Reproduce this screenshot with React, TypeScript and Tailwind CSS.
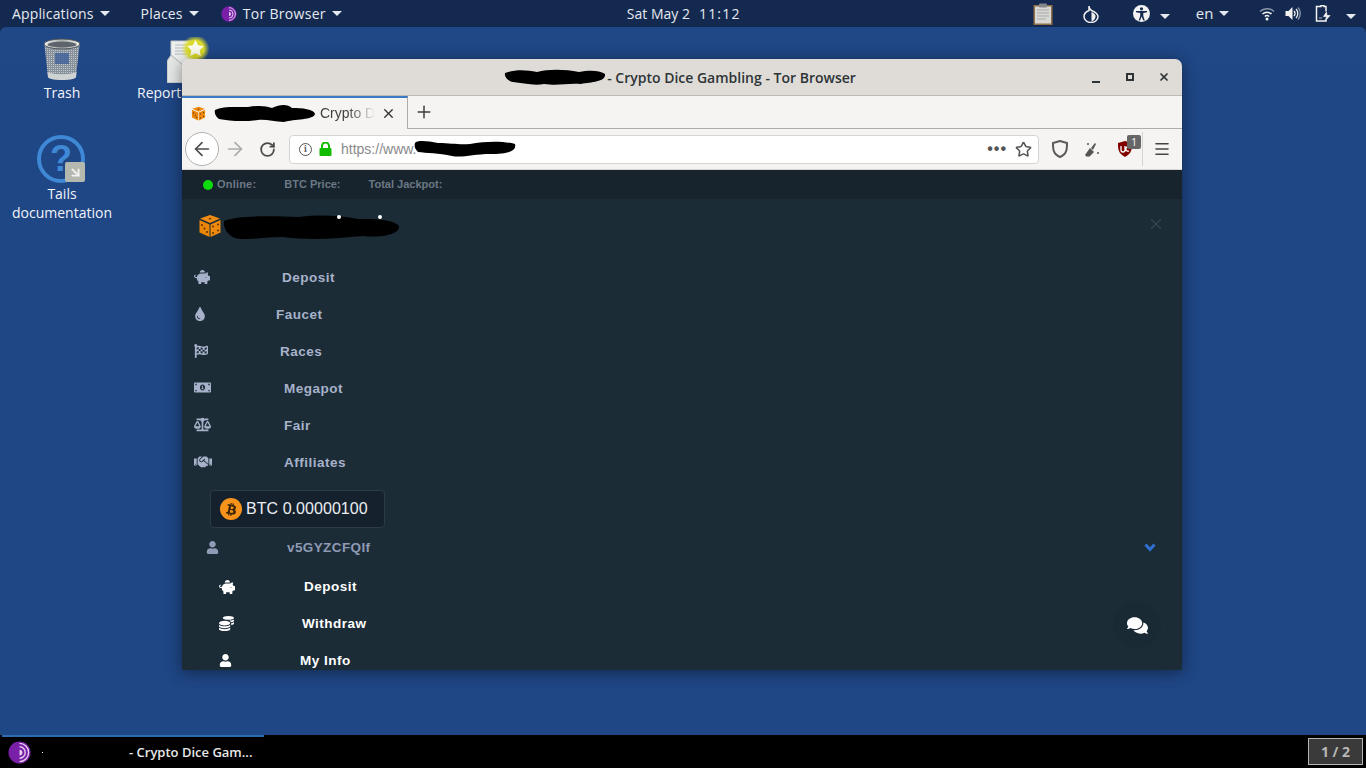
import {
  FaBalanceScale,
  FaBtc,
  FaCoins,
  FaComments,
  FaFlagCheckered,
  FaHandshake,
  FaMoneyBillAlt,
  FaPiggyBank,
  FaTint,
  FaUser,
} from 'react-icons/fa';
import { ArrowLeft, ArrowRight, Menu, Plus, RotateCw, Star, X } from 'lucide-react';

const sans = 'font-["Liberation_Sans",Arial,sans-serif]';
const ui = 'font-["Open_Sans","Noto_Sans",sans-serif]';

function Caret() {
  return <span className="ml-[6px] inline-block h-0 w-0 border-x-[5px] border-t-[5px] border-x-transparent border-t-[#e6e9ef]" />;
}

function Blob({ d, className, w, h, children }: { d: string; className: string; w: number; h: number; children?: React.ReactNode }) {
  return (
    <svg className={className} width={w} height={h} viewBox={`0 0 ${w} ${h}`}>
      <path d={d} fill="#000" />
      {children}
    </svg>
  );
}

function Dice({ size }: { size: number }) {
  return (
    <svg width={size} height={size} viewBox="0 0 24 24">
      <path d="M12 1 22 4.500 12 9 2 4.500Z" fill="#f08c12" />
      <path d="M1.500 6 11.500 10.500V23L1.500 18.500Z" fill="#e98507" />
      <path d="M22.500 6 12.500 10.500V23L22.500 18.500Z" fill="#ef8a0c" />
      <g fill="#5a3300">
        <ellipse cx="12" cy="4.800" rx="1.400" ry="0.800" />
        <circle cx="4" cy="11" r="1" />
        <circle cx="6.500" cy="14.500" r="1" />
        <circle cx="9" cy="18" r="1" />
        <circle cx="15" cy="12.500" r="1" />
        <circle cx="20" cy="10.500" r="1" />
        <circle cx="15" cy="19" r="1" />
        <circle cx="20" cy="16.500" r="1" />
      </g>
    </svg>
  );
}

function TorIcon({ size }: { size: number }) {
  return (
    <svg width={size} height={size} viewBox="0 0 24 24">
      <circle cx="12" cy="12" r="11.500" fill="#7a1fa8" />
      <path d="M12 2.500a9.500 9.500 0 0 1 0 19" fill="none" stroke="#e6d3f0" strokeWidth="1.400" />
      <path d="M12 6a6 6 0 0 1 0 12" fill="none" stroke="#e6d3f0" strokeWidth="1.400" />
      <path d="M12 9a3 3 0 0 1 0 6Z" fill="#e6d3f0" />
    </svg>
  );
}

function TopBar() {
  return (
    <div className={`flex h-[27px] shrink-0 items-center bg-[#14294f] text-[14px] font-medium text-[#e6e9ef] ${ui}`}>
      <div className="flex items-center pl-[12px]">
        <span className="tracking-[0.15px]">Applications</span>
        <Caret />
      </div>
      <div className="ml-[31px] flex items-center">
        <span className="tracking-[0.2px]">Places</span>
        <Caret />
      </div>
      <div className="ml-[22px] flex items-center">
        <TorIcon size={16} />
        <span className="ml-[6px] tracking-[0.3px]">Tor Browser</span>
        <Caret />
      </div>
      <div className="ml-[285px] flex w-[114px] whitespace-pre">
        <span>Sat May 2</span>
        <span className="ml-[9px] tracking-[1.2px]">11:12</span>
      </div>
      <div className="ml-[292px] flex items-center">
        <svg width="20" height="22" viewBox="0 0 20 22">
          <rect x="0.500" y="2" width="19" height="20" fill="#8e6f47" />
          <rect x="2" y="3.500" width="16" height="17" fill="#d8d8d4" />
          <rect x="6" y="0.500" width="8" height="4" rx="1" fill="#85888a" />
          <path d="M4 7h12M4 10h12M4 13h12M4 16h9" stroke="#a9aaa8" strokeWidth="1" />
        </svg>
        <svg className="ml-[30px]" width="16" height="18" viewBox="0 0 16 18">
          <path d="M6 1c0 3 1 3.500 2.500 4.500C12 7 15 8.500 15 11.500a7 6 0 0 1-14 0C1 8.500 3.500 6.500 6 5.500Z" fill="none" stroke="#f2f2f2" strokeWidth="1.500" />
          <path d="M8.500 7c3 1 4.500 3 4 5-.500 2.500-2.500 4-4 4.500Z" fill="#f2f2f2" />
        </svg>
        <svg className="ml-[34px]" width="17" height="17" viewBox="0 0 17 17">
          <circle cx="8.500" cy="8.500" r="8.500" fill="#f2f2f2" />
          <circle cx="8.500" cy="3.800" r="1.600" fill="#14294f" />
          <path d="M3 6h11v1.300l-3.700.8v2.900l1.500 4.500h-1.400L8.500 11.500 7.100 15.500H5.700L7.200 11V8.100L3 7.300Z" fill="#14294f" />
        </svg>
        <span className="ml-[4px]">
          <Caret />
        </span>
        <span className="ml-[26px] text-[15px]">en</span>
        <Caret />
        <svg className="ml-[30px]" width="16" height="14" viewBox="0 0 16 14">
          <path d="M1 4.500a10 10 0 0 1 14 0" fill="none" stroke="#8b96ab" strokeWidth="1.500" />
          <path d="M3.500 7a6.500 6.500 0 0 1 9 0" fill="none" stroke="#f2f2f2" strokeWidth="1.500" />
          <path d="M5.800 9.500a3.200 3.200 0 0 1 4.400 0" fill="none" stroke="#f2f2f2" strokeWidth="1.500" />
          <circle cx="8" cy="12" r="1.500" fill="#f2f2f2" />
        </svg>
        <svg className="ml-[10px]" width="16" height="15" viewBox="0 0 16 15">
          <path d="M0.500 5H3.500L7.500 1V14L3.500 10H0.500Z" fill="#f2f2f2" />
          <path d="M9 5a3.500 3.500 0 0 1 0 5" fill="none" stroke="#f2f2f2" strokeWidth="1.300" />
          <path d="M11 3a6.500 6.500 0 0 1 0 9" fill="none" stroke="#f2f2f2" strokeWidth="1.300" />
          <path d="M13 1.500a9 9 0 0 1 0 12" fill="none" stroke="#8b96ab" strokeWidth="1.300" />
        </svg>
        <svg className="ml-[14px]" width="16" height="17" viewBox="0 0 16 17">
          <path d="M3 1.500h3V0.500h3v1h2v5M11 14.500V16H1.500V1.500H3" fill="none" stroke="#f2f2f2" strokeWidth="1.500" />
          <path d="M4 13h3M11.500 7 8.500 11.500H11.500L10.500 15.500 15 10.500H12Z" fill="#f2f2f2" stroke="#f2f2f2" strokeWidth="0.700" />
        </svg>
        <span className="ml-[9px]">
          <Caret />
        </span>
      </div>
    </div>
  );
}

function TrashIcon() {
  return (
    <svg width="38" height="44" viewBox="0 0 38 44">
      <defs>
        <pattern id="mesh" width="2" height="2" patternUnits="userSpaceOnUse">
          <rect width="2" height="2" fill="#87919c" />
          <rect width="1" height="1" fill="#c1c6cb" />
        </pattern>
        <linearGradient id="rim" x1="0" x2="1">
          <stop offset="0" stopColor="#f0f2f1" />
          <stop offset="0.500" stopColor="#a9adab" />
          <stop offset="1" stopColor="#eef0ef" />
        </linearGradient>
      </defs>
      <path d="M1.500 7 5 39c1 4 27 4 28 0L36.500 7Z" fill="url(#mesh)" />
      <path d="M12 15h14v11H12Z" fill="#3d5f98" opacity="0.800" />
      <path d="M4.500 34c6 3 23 3 29 0l-.5 5c-1 4-27 4-28 0Z" fill="#cfd2d2" />
      <ellipse cx="19" cy="6" rx="18" ry="5" fill="url(#rim)" stroke="#4b5157" />
      <ellipse cx="19" cy="6.500" rx="14.500" ry="3" fill="#5d646b" />
    </svg>
  );
}

function ReportIcon() {
  return (
    <svg className="ml-[30px]" width="42" height="46" viewBox="0 0 42 46">
      <defs>
        <radialGradient id="glow">
          <stop offset="0.600" stopColor="#dcdb2a" />
          <stop offset="1" stopColor="#dcdb2a" stopOpacity="0" />
        </radialGradient>
      </defs>
      <path d="M4 4h24v28H4Z" fill="#eef0f0" stroke="#c0c4c4" />
      <path d="M8 8h16M8 11h16M8 14h16M8 17h12" stroke="#b4b9bb" />
      <path d="M0 24 4 18 16 28 30 20V46H0Z" fill="#e6e8e7" stroke="#b0b5b3" />
      <circle cx="28.500" cy="12" r="14" fill="url(#glow)" />
      <path d="m28.500 3 2.600 5.300 5.800.8-4.200 4.100 1 5.800-5.200-2.700-5.200 2.700 1-5.800-4.200-4.100 5.800-.8Z" fill="#fbfbef" />
    </svg>
  );
}

function DesktopIcons() {
  return (
    <div className={`text-[14px] text-[#f2f4f8] ${ui}`}>
      <div className="absolute left-[22px] top-[11px] flex w-[80px] flex-col items-center">
        <TrashIcon />
        <span className="mt-[1px] leading-[19px]">Trash</span>
      </div>
      <div className="absolute left-[137px] top-[10px]">
        <ReportIcon />
        <span className="block leading-[19px]">Report an error</span>
      </div>
      <div className="absolute left-[2px] top-[108px] flex w-[120px] flex-col items-center">
        <div className="relative h-[50px] w-[50px]">
          <div className={`flex h-[48px] w-[48px] items-center justify-center rounded-full border-[4px] border-[#3f88d6] text-[36px] font-bold text-[#3f88d6] ${sans}`}>
            ?
          </div>
          <div className="absolute bottom-[3px] right-[2px] flex h-[20px] w-[20px] items-center justify-center rounded-[2px] bg-[#b5b8ae]">
            <ArrowRight size={15} className="rotate-45 text-[#f2f2f2]" strokeWidth={3} />
          </div>
        </div>
        <span className="mt-[-1px] leading-[19px]">Tails</span>
        <span className="leading-[19px]">documentation</span>
      </div>
    </div>
  );
}

function TitleBar() {
  return (
    <div className={`relative flex h-[37px] shrink-0 items-center justify-center rounded-t-[7px] border-b border-[#bdb9b3] bg-[#dfdcd8] text-[14px] font-semibold text-[#2e3436] ${ui}`}>
      <div className="mr-[4px] flex items-center">
        <Blob
          className="mr-[1px]"
          w={102}
          h={17}
          d="M1 4C12 0 22 1 33 3 44 0 60 0 75 3 85 1 95 1 101 5 102 13 88 13 77 15 62 14 55 17 40 15 30 17 18 14 9 13 4 12 0 8 1 4Z"
        />
        <span>- Crypto Dice Gambling - Tor Browser</span>
      </div>
      <div className="absolute right-[12px] top-0 flex h-[36px] items-center gap-[24px] text-[#2e3436]">
        <span className="mr-[2px] mt-[9px] block h-[2px] w-[8px] bg-[#2e3436]" />
        <span className="block h-[8px] w-[8px] border-[2px] border-[#2e3436]" />
        <X size={12} strokeWidth={3.500} />
      </div>
    </div>
  );
}

function TabBar() {
  return (
    <div className="flex h-[33px] shrink-0 border-b border-[#aeaca8] bg-[#f5f4f2]">
      <div className={`flex h-[33px] w-[226px] items-center border-r border-[#aeaca8] border-t-[2px] border-t-[#3b7ac4] bg-[#f5f4f2] pl-[9px] text-[14px] ${sans}`}>
        <Dice size={15} />
        <Blob
          className="ml-[8px]"
          w={102}
          h={19}
          d="M1 6C8 2 22 3 34 3 45 1 52 2 58 4 66 0 74 0 78 4 88 4 100 5 101 10 100 16 80 15 70 18 60 18 52 15 44 16 30 18 15 17 5 15 2 13 0 9 1 6Z"
        />
        <span className="ml-[4px] bg-gradient-to-r from-[#3c3c3c] from-[50%] to-[#f5f4f2] bg-clip-text text-transparent">Crypto D</span>
        <X size={15} className="ml-[6px] text-[#333]" strokeWidth={2.200} />
      </div>
      <div className="flex w-[31px] items-center justify-center">
        <Plus size={20} className="text-[#3f3f3f]" strokeWidth={1.800} />
      </div>
    </div>
  );
}

function NavBar() {
  return (
    <div className={`flex h-[41px] shrink-0 items-center border-b border-[#d8d6d3] bg-[#f5f4f2] text-[#555] ${sans}`}>
      <div className="ml-[3px] flex h-[34px] w-[34px] items-center justify-center rounded-full border border-[#b1b1b1] bg-white">
        <ArrowLeft size={22} className="text-[#4a4a4a]" strokeWidth={1.800} />
      </div>
      <ArrowRight size={22} className="ml-[5px] text-[#aaa]" strokeWidth={1.800} />
      <RotateCw size={17} className="ml-[13px] text-[#4a4a4a]" strokeWidth={2.500} />
      <div className="ml-[13px] flex h-[29px] w-[750px] items-center rounded-[4px] border border-[#d6d4d0] bg-white">
        <span className="ml-[9px] flex h-[13px] w-[13px] items-center justify-center rounded-full border-[1.500px] border-[#555] font-serif text-[9px] font-bold leading-none">i</span>
        <svg className="ml-[7px]" width="13" height="14" viewBox="0 0 13 14">
          <path d="M3 6V4a3.500 3.500 0 0 1 7 0v2" fill="none" stroke="#12bc00" strokeWidth="2" />
          <rect x="0.500" y="6" width="12" height="8" rx="1" fill="#12bc00" />
        </svg>
        <span className="ml-[9px] text-[14px] text-[#8a8a8a]">https://www.</span>
        <Blob
          className="ml-[-2px]"
          w={102}
          h={18}
          d="M1 3C3 0 14 1 24 3 38 3 44 5 56 4 72 1 90 1 101 4 103 12 92 14 76 14 60 14 48 18 38 16 25 13 12 13 4 12 1 9 0 6 1 3Z"
        />
        <span className="ml-auto text-[16px] font-bold leading-none tracking-[1px] text-[#555]">•••</span>
        <Star size={17} className="ml-[8px] mr-[6px] text-[#555]" strokeWidth={2.200} />
      </div>
      <svg className="ml-[13px]" width="16" height="18" viewBox="0 0 16 18">
        <path d="M8 1 15 3c0 6 0 11-7 14C1 14 1 9 1 3Z" fill="none" stroke="#5a5a5a" strokeWidth="2" />
      </svg>
      <svg className="ml-[15px]" width="17" height="17" viewBox="0 0 17 17">
        <path d="M7 7 2 14l2 2 1-1 1 1 5-5Z" fill="#555" />
        <path d="m8 7 4-5 1 1-3 6Z" fill="#555" />
        <path d="M4 3h2M5 2v2M14 12h2M15 11v2" stroke="#555" />
      </svg>
      <div className="relative ml-[18px] h-[16px] w-[14px]">
        <svg width="14" height="16" viewBox="0 0 14 16">
          <path d="M7 0 14 2c0 6 0 10-7 14C0 12 0 8 0 2Z" fill="#800000" />
          <path d="M3 5v4a2 2 0 0 0 4 0V5M11 6a2.200 2.200 0 1 0 0 4" fill="none" stroke="#fff" strokeWidth="1.300" />
        </svg>
        <span className={`absolute left-[9px] top-[-6px] flex h-[14px] w-[14px] items-center justify-center rounded-[2px] bg-[#666] text-[10px] text-white ${ui}`}>1</span>
      </div>
      <span className="ml-[10px] h-[34px] w-px bg-[#d6d4d0]" />
      <Menu size={18} className="ml-[10px] text-[#444]" strokeWidth={2.200} />
    </div>
  );
}

const mainLinks = [
  { label: 'Deposit', icon: FaPiggyBank, textClass: 'left-[100px]', iconClass: 'text-[16px]' },
  { label: 'Faucet', icon: FaTint, textClass: 'left-[94px]', iconClass: 'text-[14px] -ml-[1px]' },
  { label: 'Races', icon: FaFlagCheckered, textClass: 'left-[98px]', iconClass: 'text-[14px]' },
  { label: 'Megapot', icon: FaMoneyBillAlt, textClass: 'left-[102px]', iconClass: 'text-[17px]' },
  { label: 'Fair', icon: FaBalanceScale, textClass: 'left-[102px]', iconClass: 'text-[17px]' },
  { label: 'Affiliates', icon: FaHandshake, textClass: 'left-[102px]', iconClass: 'text-[18px]' },
];

const accountLinks = [
  { label: 'Deposit', icon: FaPiggyBank, textClass: 'left-[122px]', iconClass: 'text-[16px]' },
  { label: 'Withdraw', icon: FaCoins, textClass: 'left-[120px]', iconClass: 'text-[15px]' },
  { label: 'My Info', icon: FaUser, textClass: 'left-[118px]', iconClass: 'text-[13px]' },
];

function SiteContent() {
  return (
    <div className={`relative min-h-0 flex-1 overflow-hidden bg-[#1b2c37] ${sans}`}>
      <div className="flex h-[29px] items-center bg-[#17242d] text-[11px] font-bold text-[#6c7885]">
        <span className="ml-[21px] h-[10px] w-[10px] rounded-full bg-[#0fdc0f]" />
        <span className="ml-[4px] tracking-[0.2px]">Online:</span>
        <span className="ml-[28px]">BTC Price:</span>
        <span className="ml-[28px]">Total Jackpot:</span>
      </div>
      <div className="flex h-[59px] items-center pb-[6px] pl-[16px]">
        <Dice size={24} />
        <Blob
          className="ml-[1px] mt-[2px]"
          w={177}
          h={28}
          d="M1 8C14 2 50 3 76 4 100 1 118 3 135 6 150 6 170 6 176 13 177 21 160 25 140 23 115 25 90 28 60 24 40 24 20 28 12 25 4 22 0 14 1 8Z"
        >
          <circle cx="116" cy="4" r="2" fill="#fff" />
          <circle cx="157" cy="4" r="2" fill="#fff" />
        </Blob>
        <X size={18} className="ml-auto mr-[17px] mt-[-3px] text-[#37454f]" strokeWidth={1.500} />
      </div>
      <div className="flex flex-col text-[13.5px] font-bold tracking-[0.5px] text-[#a7b2ca]">
        {mainLinks.map((l) => (
          <div key={l.label} className="relative flex h-[37px] items-center pl-[12px]">
            <l.icon className={l.iconClass} />
            <span className={`absolute mt-[3px] ${l.textClass}`}>{l.label}</span>
          </div>
        ))}
      </div>
      <div className="ml-[28px] mt-[10px] flex h-[38px] w-[175px] items-center rounded-[4px] border border-[#2b3b48] bg-[#15222d] pl-[9px] text-[16px] text-[#ebeef2]">
        <span className="flex h-[22px] w-[22px] items-center justify-center rounded-full bg-[#f7931a] text-[13px] text-[#3a2406]">
          <FaBtc className="rotate-12" />
        </span>
        <span className="ml-[4px] tracking-[0.05px]">BTC 0.00000100</span>
      </div>
      <div className="relative mt-[1px] flex h-[37px] items-center pl-[24px] text-[13.5px] font-bold tracking-[0.4px] text-[#8f9ab5]">
        <FaUser className="text-[13px]" />
        <span className="absolute mt-[2px] left-[105px]">v5GYZCFQIf</span>
        <svg className="ml-auto mr-[26px]" width="12" height="9" viewBox="0 0 12 9">
          <path d="M1.500 1.500 6 6.500l4.500-5" fill="none" stroke="#2f6fd0" strokeWidth="3" />
        </svg>
      </div>
      <div className="flex flex-col pt-[2px] text-[13.5px] font-bold tracking-[0.5px] text-white">
        {accountLinks.map((l) => (
          <div key={l.label} className="relative flex h-[37px] items-center pl-[37px]">
            <l.icon className={l.iconClass} />
            <span className={`absolute mt-[2px] ${l.textClass}`}>{l.label}</span>
          </div>
        ))}
      </div>
      <div className="absolute right-[21px] top-[431px] flex h-[48px] w-[48px] items-center justify-center rounded-full bg-[#1a2a35]">
        <FaComments className="text-[21px] text-white" />
      </div>
    </div>
  );
}

function BrowserWindow() {
  return (
    <div className="absolute left-[182px] top-[32px] flex h-[611px] w-[1000px] flex-col rounded-t-[7px] shadow-[0_2px_16px_rgba(0,0,0,0.45)]">
      <TitleBar />
      <TabBar />
      <NavBar />
      <SiteContent />
    </div>
  );
}

function BottomBar() {
  return (
    <div className={`flex h-[33px] shrink-0 items-center justify-between bg-black pr-[3px] ${ui}`}>
      <div className="ml-[2px] flex h-full w-[262px] items-center border-t-[2px] border-[#2d6cb0] pl-[6px] text-[13px] font-semibold text-[#e8e8e8]">
        <TorIcon size={23} />
        <span className="ml-[11px] h-px w-px bg-white" />
        <span className="ml-[86px] whitespace-nowrap">- Crypto Dice Gam...</span>
      </div>
      <div className="flex h-[27px] w-[55px] items-center justify-center border border-[#b6b6b6] bg-[#3a3a3a] text-[14px] font-bold text-[#b8b8b8]">
        1 / 2
      </div>
    </div>
  );
}

export default function App() {
  return (
    <div className="flex h-[768px] w-[1366px] flex-col overflow-hidden bg-[#14294f]">
      <TopBar />
      <div className="relative min-h-0 flex-1 rounded-t-[6px] bg-gradient-to-b from-[#204887] from-[0%] to-[#1f4685] to-[10%]">
        <DesktopIcons />
        <BrowserWindow />
      </div>
      <BottomBar />
    </div>
  );
}
